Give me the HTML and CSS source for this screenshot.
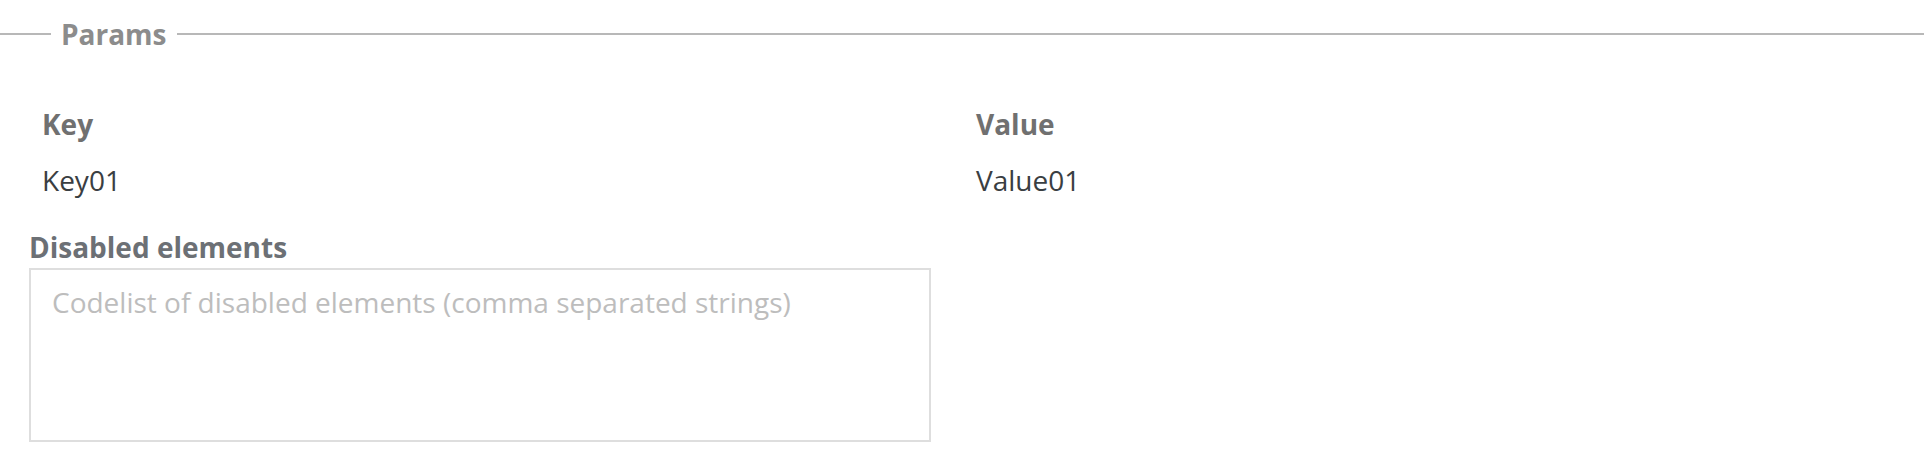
FILE: index.html
```html
<!DOCTYPE html>
<html lang="en">
<head>
    <meta charset="UTF-8">
    <meta name="viewport" content="width=device-width, initial-scale=1.0">
    <title>Params</title>
    <link rel="stylesheet" href="styles.css">
</head>
<body>
    <div class="section-title">
        <span class="rule rule-short"></span>
        <h2>Params</h2>
        <span class="rule rule-long"></span>
    </div>

    <div class="params-table">
        <div class="cell head">Key</div>
        <div class="cell head">Value</div>
        <div class="cell">Key01</div>
        <div class="cell">Value01</div>
    </div>

    <div class="form-group">
        <label for="disabledElements">Disabled elements</label>
        <textarea id="disabledElements" placeholder="Codelist of disabled elements (comma separated strings)"></textarea>
    </div>
</body>
</html>
```

FILE: styles.css
```css
:root {
    --rule-color: #b8b8b8;
    --label-color: #6c7075;
    --text-color: #3a3e42;
}

* {
    margin: 0;
    padding: 0;
    box-sizing: border-box;
}

body {
    font-family: 'Open Sans', sans-serif;
    background: #fff;
    color: var(--text-color);
}

.section-title {
    display: flex;
    align-items: center;
    gap: 10px;
    padding-top: 13px;
}

.section-title h2 {
    font-size: 28px;
    line-height: 42px;
    font-weight: 700;
    color: #8c8c8c;
}

.rule {
    height: 2px;
    background: var(--rule-color);
}

.rule-short {
    width: 51px;
}

.rule-long {
    flex: 1;
}

.params-table {
    display: grid;
    grid-template-columns: 934px 934px;
    padding: 48px 0 0 30px;
}

.cell {
    font-size: 28px;
    line-height: 42px;
    padding: 0 12px;
    margin-bottom: 14px;
}

.cell.head {
    font-weight: 700;
    color: #707070;
}

.form-group {
    padding-left: 29px;
    margin-top: 11px;
}

label {
    display: block;
    font-size: 28px;
    line-height: 42px;
    font-weight: 700;
    color: var(--label-color);
}

textarea {
    display: block;
    width: 902px;
    height: 174px;
    border: 2px solid #dedede;
    padding: 11px 21px;
    font-family: 'Open Sans', sans-serif;
    font-size: 28px;
    line-height: 42px;
    color: var(--text-color);
    resize: none;
    outline: none;
}

textarea::placeholder {
    color: #bdbdbd;
}
```
